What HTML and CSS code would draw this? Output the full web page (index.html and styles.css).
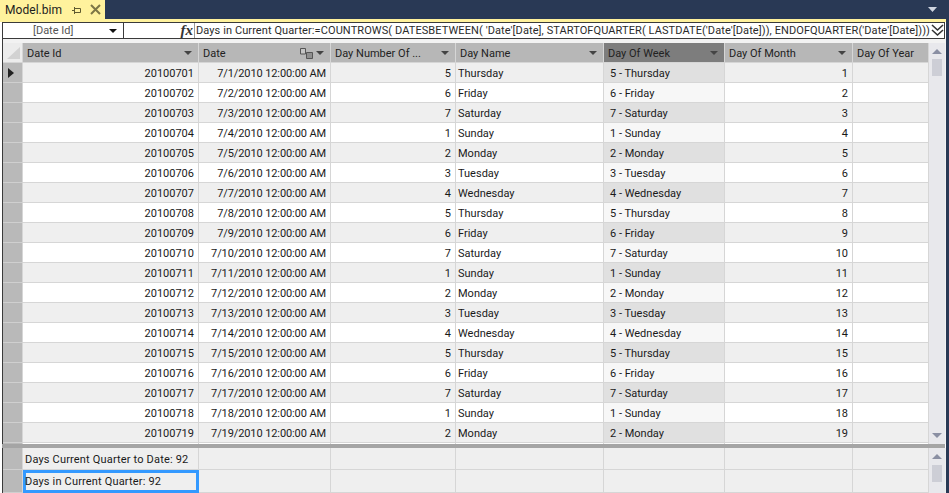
FILE: index.html
```html
<!DOCTYPE html>
<html lang="en">
<head>
<meta charset="utf-8">
<title>Model.bim</title>
<link rel="stylesheet" href="styles.css">
</head>
<body>
<div class="tabbar">
  <div class="tab">
    <span class="tab-name">Model.bim</span>
    <svg class="pin" width="9" height="7" viewBox="0 0 9 7"><path d="M0 3.500H2.500M2.500 1.500H8.500V5.500H2.500ZM2.500 0V7" fill="none" stroke="#5f5a30" stroke-width="1"/></svg>
    <svg class="close" width="11" height="11" viewBox="0 0 11 11"><path d="M1 1L10 10M10 1L1 10" fill="none" stroke="#7d7646" stroke-width="2"/></svg>
  </div>
  <svg class="overflow" width="9" height="5" viewBox="0 0 9 5"><path d="M0 0H9L4.500 5Z" fill="#cfd5e0"/></svg>
</div>
<div class="accent"></div>
<div class="doc">
  <div class="formula">
    <div class="combo"><span class="combo-text">[Date Id]</span><span class="combo-arrow"></span></div>
    <div class="fx">fx</div>
    <div class="expr">Days in Current Quarter:=COUNTROWS( DATESBETWEEN( 'Date'[Date], STARTOFQUARTER( LASTDATE('Date'[Date])), ENDOFQUARTER('Date'[Date])))</div>
    <svg class="chev" width="13" height="14" viewBox="0 0 13 14"><path d="M1 1L6.500 6L12 1M1 6L6.500 11L12 6" fill="none" stroke="#333" stroke-width="1.600"/></svg>
  </div>
  <div class="pane top">
    <div class="grid-wrap">
      <table class="grid">
        <colgroup><col class="c0"><col class="c1"><col class="c2"><col class="c3"><col class="c4"><col class="c5"><col class="c6"><col class="c7"></colgroup>
        <thead>
          <tr>
            <th class="corner"><svg width="20" height="19" viewBox="0 0 20 19"><path d="M17 4V16H4Z" fill="#d2d2d2"/></svg></th>
            <th><div class="h"><span>Date Id</span><i class="drop"></i></div></th>
            <th><div class="h"><span>Date</span><svg class="rel" width="14" height="11" viewBox="0 0 14 11"><path d="M.5.5H5.500V6H.5Z" fill="#c4c4c4" stroke="#555"/><path d="M6.500 4.500H12.500V10.500H6.500Z" fill="#8f8f8f" stroke="#555"/></svg><i class="drop tight"></i></div></th>
            <th><div class="h"><span>Day Number Of ...</span><i class="drop"></i></div></th>
            <th><div class="h"><span>Day Name</span><i class="drop"></i></div></th>
            <th class="sel-h"><div class="h"><span>Day Of Week</span><i class="drop"></i></div></th>
            <th><div class="h"><span>Day Of Month</span><i class="drop"></i></div></th>
            <th><div class="h"><span>Day Of Year</span></div></th>
          </tr>
        </thead>
        <tbody>
          <tr><th class="rh"><i class="cur"></i></th><td class="r">20100701</td><td class="r">7/1/2010 12:00:00 AM</td><td class="r">5</td><td>Thursday</td><td class="dw">5 - Thursday</td><td class="r">1</td><td></td></tr>
          <tr><th class="rh"></th><td class="r">20100702</td><td class="r">7/2/2010 12:00:00 AM</td><td class="r">6</td><td>Friday</td><td class="dw">6 - Friday</td><td class="r">2</td><td></td></tr>
          <tr><th class="rh"></th><td class="r">20100703</td><td class="r">7/3/2010 12:00:00 AM</td><td class="r">7</td><td>Saturday</td><td class="dw">7 - Saturday</td><td class="r">3</td><td></td></tr>
          <tr><th class="rh"></th><td class="r">20100704</td><td class="r">7/4/2010 12:00:00 AM</td><td class="r">1</td><td>Sunday</td><td class="dw">1 - Sunday</td><td class="r">4</td><td></td></tr>
          <tr><th class="rh"></th><td class="r">20100705</td><td class="r">7/5/2010 12:00:00 AM</td><td class="r">2</td><td>Monday</td><td class="dw">2 - Monday</td><td class="r">5</td><td></td></tr>
          <tr><th class="rh"></th><td class="r">20100706</td><td class="r">7/6/2010 12:00:00 AM</td><td class="r">3</td><td>Tuesday</td><td class="dw">3 - Tuesday</td><td class="r">6</td><td></td></tr>
          <tr><th class="rh"></th><td class="r">20100707</td><td class="r">7/7/2010 12:00:00 AM</td><td class="r">4</td><td>Wednesday</td><td class="dw">4 - Wednesday</td><td class="r">7</td><td></td></tr>
          <tr><th class="rh"></th><td class="r">20100708</td><td class="r">7/8/2010 12:00:00 AM</td><td class="r">5</td><td>Thursday</td><td class="dw">5 - Thursday</td><td class="r">8</td><td></td></tr>
          <tr><th class="rh"></th><td class="r">20100709</td><td class="r">7/9/2010 12:00:00 AM</td><td class="r">6</td><td>Friday</td><td class="dw">6 - Friday</td><td class="r">9</td><td></td></tr>
          <tr><th class="rh"></th><td class="r">20100710</td><td class="r">7/10/2010 12:00:00 AM</td><td class="r">7</td><td>Saturday</td><td class="dw">7 - Saturday</td><td class="r">10</td><td></td></tr>
          <tr><th class="rh"></th><td class="r">20100711</td><td class="r">7/11/2010 12:00:00 AM</td><td class="r">1</td><td>Sunday</td><td class="dw">1 - Sunday</td><td class="r">11</td><td></td></tr>
          <tr><th class="rh"></th><td class="r">20100712</td><td class="r">7/12/2010 12:00:00 AM</td><td class="r">2</td><td>Monday</td><td class="dw">2 - Monday</td><td class="r">12</td><td></td></tr>
          <tr><th class="rh"></th><td class="r">20100713</td><td class="r">7/13/2010 12:00:00 AM</td><td class="r">3</td><td>Tuesday</td><td class="dw">3 - Tuesday</td><td class="r">13</td><td></td></tr>
          <tr><th class="rh"></th><td class="r">20100714</td><td class="r">7/14/2010 12:00:00 AM</td><td class="r">4</td><td>Wednesday</td><td class="dw">4 - Wednesday</td><td class="r">14</td><td></td></tr>
          <tr><th class="rh"></th><td class="r">20100715</td><td class="r">7/15/2010 12:00:00 AM</td><td class="r">5</td><td>Thursday</td><td class="dw">5 - Thursday</td><td class="r">15</td><td></td></tr>
          <tr><th class="rh"></th><td class="r">20100716</td><td class="r">7/16/2010 12:00:00 AM</td><td class="r">6</td><td>Friday</td><td class="dw">6 - Friday</td><td class="r">16</td><td></td></tr>
          <tr><th class="rh"></th><td class="r">20100717</td><td class="r">7/17/2010 12:00:00 AM</td><td class="r">7</td><td>Saturday</td><td class="dw">7 - Saturday</td><td class="r">17</td><td></td></tr>
          <tr><th class="rh"></th><td class="r">20100718</td><td class="r">7/18/2010 12:00:00 AM</td><td class="r">1</td><td>Sunday</td><td class="dw">1 - Sunday</td><td class="r">18</td><td></td></tr>
          <tr><th class="rh"></th><td class="r">20100719</td><td class="r">7/19/2010 12:00:00 AM</td><td class="r">2</td><td>Monday</td><td class="dw">2 - Monday</td><td class="r">19</td><td></td></tr>
          <tr><th class="rh"></th><td></td><td></td><td></td><td></td><td class="dw"></td><td></td><td></td></tr>
        </tbody>
      </table>
    </div>
    <div class="scroll">
      <i class="up"></i>
      <i class="thumb"></i>
      <i class="fill"></i>
      <i class="down"></i>
    </div>
  </div>
  <div class="splitter"></div>
  <div class="pane bottom">
    <table class="grid measures">
      <colgroup><col class="c0"><col class="c1"><col class="c2"><col class="c3"><col class="c4"><col class="c5"><col class="c6"><col class="c7"></colgroup>
      <tbody>
        <tr><th class="rh"></th><td>Days Current Quarter to Date: 92</td><td></td><td></td><td></td><td></td><td></td><td></td></tr>
        <tr class="last"><th class="rh"></th><td class="active">Days in Current Quarter: 92</td><td></td><td></td><td></td><td></td><td></td><td></td></tr>
      </tbody>
    </table>
    <div class="scroll small">
      <i class="up"></i>
      <i class="thumb"></i>
    </div>
  </div>
</div>
</body>
</html>
```
FILE: styles.css
```css
* { box-sizing: border-box; }
html, body { margin: 0; padding: 0; height: 100%; }
body {
  width: 949px;
  height: 493px;
  overflow: hidden;
  background: #293955;
  font-family: Roboto, "Noto Sans", sans-serif;
  font-size: 11px;
  color: #1a1a1a;
}
.tabbar {
  height: 19px;
  display: flex;
  align-items: center;
  justify-content: space-between;
  padding-right: 12px;
}
.tab {
  width: 105px;
  height: 19px;
  background: #fff29d;
  display: flex;
  align-items: center;
  padding-left: 5px;
}
.tab-name { font-size: 12px; letter-spacing: .05px; width: 67px; color: #1c1c1c; }
.pin { margin-right: 9px; margin-top: 1px; }
.accent { height: 3px; background: #fff29d; margin-right: 3px; }
.doc {
  width: 946px;
  height: 471px;
  background: #fff;
  padding-left: 2px;
}
.formula {
  height: 17px;
  margin-right: 1px;
  display: flex;
  align-items: center;
  border: 1px solid #3a3a3a;
  background: #fff;
  overflow: hidden;
}
.combo {
  width: 121px;
  height: 100%;
  flex: none;
  border-right: 1px solid #3a3a3a;
  display: flex;
  align-items: center;
  justify-content: space-between;
  padding: 0 6px 0 30px;
}
.combo-text { color: #555; }
.combo-arrow {
  width: 0;
  height: 0;
  border-left: 4px solid transparent;
  border-right: 4px solid transparent;
  border-top: 4px solid #111;
}
.fx {
  width: 71px;
  flex: none;
  height: 100%;
  text-align: right;
  padding-right: 1px;
  font-family: "Liberation Serif", serif;
  font-style: italic;
  font-weight: bold;
  font-size: 15px;
  line-height: 14px;
  color: #333;
  border-right: 1px solid #9a9a9a;
}
.expr {
  flex: 1;
  padding-left: 1px;
  white-space: nowrap;
  overflow: hidden;
  color: #2b2b2b;
  line-height: 15px;
  letter-spacing: .09px;
}
.chev { flex: none; }
.pane { display: flex; background: #e8e8ec; border-left: 1px solid #3a3a3a; }
.top { height: 405px; padding-top: 4px; background: #f2f2f2; }
.grid-wrap { width: 926px; height: 401px; overflow: hidden; flex: none; }
.grid {
  width: 926px;
  table-layout: fixed;
  border-collapse: separate;
  border-spacing: 0;
  flex: none;
}
.c0 { width: 20px; }
.c1 { width: 176px; }
.c2 { width: 132px; }
.c3 { width: 125px; }
.c4 { width: 148px; }
.c5 { width: 121px; }
.c6 { width: 128px; }
.c7 { width: 76px; }
thead th {
  height: 20px;
  padding: 0;
  background: #b7b7b7;
  border-right: 1px solid #d6d6d6;
  border-bottom: 1px solid #d6d6d6;
  font-weight: normal;
  text-align: left;
}
th.corner { background: #ececec; }
.corner svg { display: block; }
th.sel-h { background: #7d7d7d; }
.h {
  display: flex;
  align-items: center;
  height: 19px;
  padding: 1px 6px 0 4px;
  white-space: nowrap;
  overflow: hidden;
}
.h span { flex: 1; color: #222; }
.drop {
  width: 0;
  height: 0;
  border-left: 4px solid transparent;
  border-right: 4px solid transparent;
  border-top: 4px solid #444;
  flex: none;
}
.drop.tight { margin-left: 2px; }
.rel { flex: none; }
tbody td {
  height: 20px;
  padding: 2px 4px 0 2px;
  border-right: 1px solid #d6d6d6;
  border-bottom: 1px solid #d6d6d6;
  white-space: nowrap;
  overflow: hidden;
  line-height: 17px;
}
.grid tbody td:nth-child(3) { letter-spacing: -.1px; }
tbody th.rh {
  padding: 0;
  background: #b9b9b9;
  border-right: 1px solid #d6d6d6;
  border-bottom: 1px solid #cfcfcf;
}
tbody tr:nth-child(odd) td { background: #efefef; }
tbody tr:nth-child(even) td { background: #fff; }
td.r { text-align: right; }
tbody tr:nth-child(odd) td.dw { background: #e0e0e0; padding-left: 6px; }
tbody tr:nth-child(even) td.dw { background: #f7f7f7; padding-left: 6px; }
.cur {
  display: block;
  width: 0;
  height: 0;
  margin-left: 5px;
  border-top: 5px solid transparent;
  border-bottom: 5px solid transparent;
  border-left: 6px solid #222;
}
.scroll {
  width: 16px;
  flex: none;
  background: #e8e8ec;
  display: flex;
  flex-direction: column;
  align-items: center;
}
.scroll i { display: block; flex: none; }
.up {
  width: 0;
  height: 0;
  margin-top: 6px;
  border-left: 5px solid transparent;
  border-right: 5px solid transparent;
  border-bottom: 5px solid #8a8fa3;
}
.thumb { width: 10px; height: 17px; margin-top: 5px; background: #cdced6; }
.fill { flex: 1 !important; }
.down {
  width: 0;
  height: 0;
  margin-bottom: 6px;
  border-left: 5px solid transparent;
  border-right: 5px solid transparent;
  border-top: 5px solid #8a8fa3;
}
.splitter { height: 4px; background: #a5a5a5; margin-right: 1px; }
.bottom { height: 45px; background: #efefef; }
.measures tbody tr:nth-child(n) td {
  background: #efefef;
  height: 22px;
  padding-left: 2px;
  letter-spacing: .17px;
}
.measures tbody tr.last td { height: 23px; }
.measures tbody tr:nth-child(n) td.active {
  border: 3px solid #3399ff;
  padding: 1px 0 0 0;
  line-height: 16px;
  overflow: visible;
  text-indent: -1px;
}
.small .up { margin-top: 6px; }
.small .thumb { height: 17px; margin-top: 6px; }
```
